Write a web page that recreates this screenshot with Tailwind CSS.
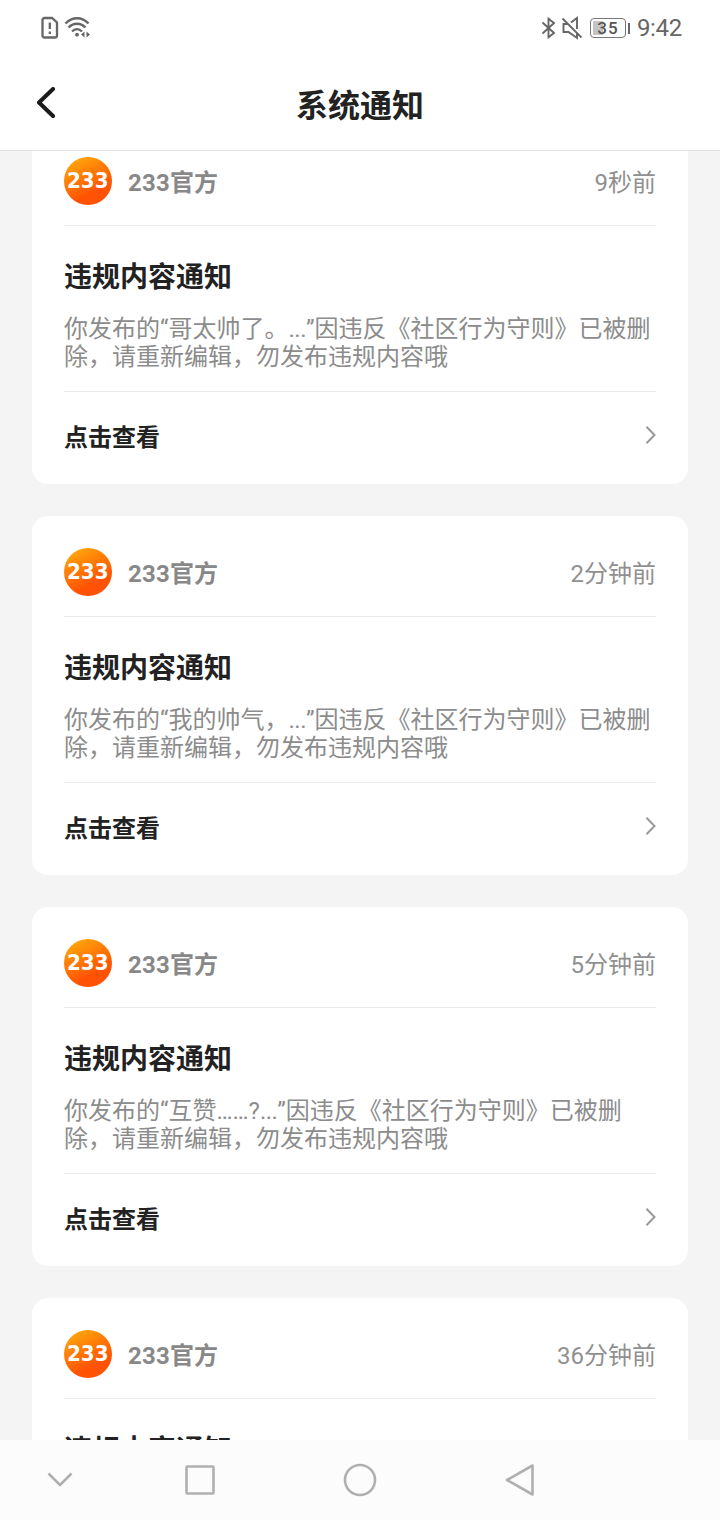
<!DOCTYPE html>
<html lang="zh-CN">
<head>
<meta charset="utf-8">
<title>系统通知</title>
<script src="https://cdn.jsdelivr.net/npm/@tailwindcss/browser@4"></script>
</head>
<body class="w-[720px] h-[1520px] overflow-hidden bg-[#f4f4f4] font-[Roboto,'Noto_Sans_CJK_SC',sans-serif] flex flex-col">
<svg class="absolute w-0 h-0">
  <defs>
    <linearGradient id="lg" x1="0.1" y1="0" x2="0.6" y2="1"><stop offset="0" stop-color="#ffb010"/><stop offset="0.45" stop-color="#ff7a05"/><stop offset="0.8" stop-color="#ff5204"/></linearGradient>
  </defs>
  <symbol id="logo" viewBox="0 0 48 48"><circle cx="24" cy="24" r="24" fill="url(#lg)"/><text x="3" y="31.3" textLength="41.5" lengthAdjust="spacingAndGlyphs" font-family="DejaVu Sans" font-weight="700" font-size="20.5" fill="#fff">233</text></symbol>
  <symbol id="go" viewBox="0 0 12 20"><path d="M2.500 1.800 10.500 10 2.500 18.200" fill="none" stroke="#999" stroke-width="2"/></symbol>
</svg>

<header class="h-[151px] shrink-0 bg-white border-b border-[#e2e2e2]">
  <div class="h-14 flex items-center justify-between pl-10 pr-[38px] text-[#666]">
    <svg class="w-[52px] h-6" viewBox="0 0 52 24" fill="none" stroke="#666" stroke-width="2.300">
      <path d="M4.500 2H12l5 4.500V19.500a2 2 0 0 1-2 2H4.500a2 2 0 0 1-2-2V4a2 2 0 0 1 2-2Z"/>
      <path d="M9.800 6.500v6.500M9.800 15.500v2.500"/>
      <path d="M25.500 7.500C32 .5 42 .5 48.500 7.500M28.500 11.500c5-5 12-5 17 0M32 15.500c3-3 7-3 10 0"/>
      <circle cx="37" cy="18.700" r="1.900" fill="#666" stroke="none"/>
      <path d="M44.500 15.500v6l-3.500-3ZM46.500 15.500v6l3.500-3Z" fill="#666" stroke="none"/>
    </svg>
    <div class="flex items-center">
      <svg class="w-[42px] h-6" viewBox="0 0 42 24" fill="none" stroke="#666" stroke-width="1.900">
        <path d="m2.500 6.500 11.500 10.500-5.500 4.300V2.700L14 7 2.500 17.500"/>
        <path d="M22.500 2.500 41.500 21.500M27.500 8H23.500v8h5l8.500 6V17M31 6.500l6-4.500v11"/>
      </svg>
      <div class="ml-[8px] w-9 h-5 rounded-[4px] border border-[#777] p-[2px] bg-linear-to-r from-[#c4c4c4] from-35% to-white to-35% bg-clip-content text-[17px] leading-[15px] tracking-[1px] text-center font-medium text-[#555]">35</div>
      <div class="ml-[2px] w-[2px] h-[11px] bg-[#666]"></div>
      <div class="ml-[7px] text-[24px] leading-6 tracking-[-0.3px]">9:42</div>
    </div>
  </div>
  <div class="h-[94px] grid grid-cols-[1fr_auto_1fr] items-center pl-9 pr-9">
    <svg class="w-5 h-8" viewBox="0 0 20 32" fill="none" stroke="#1a1a1a" stroke-width="4" stroke-linecap="round" stroke-linejoin="round"><path d="M17 2 3 15.500 17 29"/></svg>
    <h1 class="text-[32px] leading-10 font-bold text-[#222] mt-[5px]">系统通知</h1>
    <div></div>
  </div>
</header>

<main class="h-[1289px] shrink-0 overflow-hidden px-8">
  <div class="-mt-[26px] flex flex-col gap-8">
    <section class="h-[359px] shrink-0 rounded-2xl bg-white px-8 pt-8">
      <div class="h-[69px] border-b border-[#ebebeb] flex items-start">
        <svg class="size-12"><use href="#logo"/></svg>
        <span class="ml-4 mt-[10px] text-[24px] leading-8 font-bold tracking-[0.2px] text-[#888]">233官方</span>
        <span class="ml-auto mt-[10px] text-[24px] leading-8 text-[#909090]">9秒前</span>
      </div>
      <h2 class="mt-[34px] text-[28px] leading-9 font-bold text-[#222]">违规内容通知</h2>
      <p class="mt-[19px] h-[56px] text-[24px] leading-[28px] text-[#8c8c8c] whitespace-nowrap">你发布的“哥太帅了。<span class="tracking-[-0.5px]">...</span>”因违反《社区行为守则》已被删<br>除，请重新编辑，勿发布违规内容哦</p>
      <div class="mt-[20px] border-t border-[#ebebeb] h-[92px] flex items-center justify-between">
        <span class="text-[24px] leading-8 font-bold text-[#222]">点击查看</span>
        <svg class="w-3 h-5 -mt-[6px]"><use href="#go"/></svg>
      </div>
    </section>
    <section class="h-[359px] shrink-0 rounded-2xl bg-white px-8 pt-8">
      <div class="h-[69px] border-b border-[#ebebeb] flex items-start">
        <svg class="size-12"><use href="#logo"/></svg>
        <span class="ml-4 mt-[10px] text-[24px] leading-8 font-bold tracking-[0.2px] text-[#888]">233官方</span>
        <span class="ml-auto mt-[10px] text-[24px] leading-8 text-[#909090]">2分钟前</span>
      </div>
      <h2 class="mt-[34px] text-[28px] leading-9 font-bold text-[#222]">违规内容通知</h2>
      <p class="mt-[19px] h-[56px] text-[24px] leading-[28px] text-[#8c8c8c] whitespace-nowrap">你发布的“我的帅气，<span class="tracking-[-0.5px]">...</span>”因违反《社区行为守则》已被删<br>除，请重新编辑，勿发布违规内容哦</p>
      <div class="mt-[20px] border-t border-[#ebebeb] h-[92px] flex items-center justify-between">
        <span class="text-[24px] leading-8 font-bold text-[#222]">点击查看</span>
        <svg class="w-3 h-5 -mt-[6px]"><use href="#go"/></svg>
      </div>
    </section>
    <section class="h-[359px] shrink-0 rounded-2xl bg-white px-8 pt-8">
      <div class="h-[69px] border-b border-[#ebebeb] flex items-start">
        <svg class="size-12"><use href="#logo"/></svg>
        <span class="ml-4 mt-[10px] text-[24px] leading-8 font-bold tracking-[0.2px] text-[#888]">233官方</span>
        <span class="ml-auto mt-[10px] text-[24px] leading-8 text-[#909090]">5分钟前</span>
      </div>
      <h2 class="mt-[34px] text-[28px] leading-9 font-bold text-[#222]">违规内容通知</h2>
      <p class="mt-[19px] h-[56px] text-[24px] leading-[28px] text-[#8c8c8c] whitespace-nowrap">你发布的“互赞……?<span class="tracking-[-0.6px]">...</span>”因违反《社区行为守则》已被删<br>除，请重新编辑，勿发布违规内容哦</p>
      <div class="mt-[20px] border-t border-[#ebebeb] h-[92px] flex items-center justify-between">
        <span class="text-[24px] leading-8 font-bold text-[#222]">点击查看</span>
        <svg class="w-3 h-5 -mt-[6px]"><use href="#go"/></svg>
      </div>
    </section>
    <section class="h-[359px] shrink-0 rounded-2xl bg-white px-8 pt-8">
      <div class="h-[69px] border-b border-[#ebebeb] flex items-start">
        <svg class="size-12"><use href="#logo"/></svg>
        <span class="ml-4 mt-[10px] text-[24px] leading-8 font-bold tracking-[0.2px] text-[#888]">233官方</span>
        <span class="ml-auto mt-[10px] text-[24px] leading-8 text-[#909090]">36分钟前</span>
      </div>
      <h2 class="mt-[34px] text-[28px] leading-9 font-bold text-[#222]">违规内容通知</h2>
    </section>
  </div>
</main>

<nav class="h-20 shrink-0 bg-[#fcfcfc]">
  <svg class="w-[720px] h-20" viewBox="0 0 720 80" fill="none" stroke="#b0b0b0" stroke-width="2.600" stroke-linejoin="round">
    <path d="m48.500 33.500 11.500 11.500 11.500-11.500"/>
    <rect x="186.500" y="26.500" width="27" height="27" rx="1"/>
    <circle cx="360" cy="40" r="15"/>
    <path d="M532.500 25.500v29l-25.500-14.500Z"/>
  </svg>
</nav>
</body>
</html>
